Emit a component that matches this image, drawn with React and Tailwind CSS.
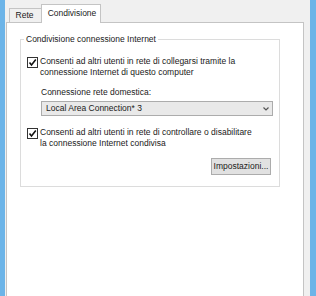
import React from "react";

const CheckBox = () => (
  <div className="mt-[1px] flex h-[11px] w-[11px] shrink-0 items-center justify-center border border-[#333333] bg-white">
    <svg width="9" height="9" viewBox="0 0 9 9">
      <polyline points="1.5,4.5 3.5,7 7.8,1.5" fill="none" stroke="#111111" strokeWidth="1.6" />
    </svg>
  </div>
);

const CheckRow = ({ lines }) => (
  <div className="flex gap-[2px]">
    <CheckBox />
    <div className="leading-[11px]">
      {lines.map((l) => (
        <div key={l}>{l}</div>
      ))}
    </div>
  </div>
);

export default function App() {
  return (
    <div
      className="flex h-[296px] w-[316px] overflow-hidden bg-[#f0f0f0] text-[8.5px] text-[#1a1a1a]"
      style={{ fontFamily: '"Liberation Sans", Arial, sans-serif' }}
    >
      <div className="w-[5px] shrink-0 bg-[#6cb4e8]" />

      <div className="flex flex-1 flex-col pl-[1px] pr-[6px] pt-[4px]">
        {/* tabs */}
        <div className="flex h-[18px] shrink-0 items-end pl-[3px]">
          <div className="-mr-px flex h-[14px] w-[33px] items-center justify-center border border-b-0 border-[#c4c4c4] bg-[#f0f0f0] pr-[2px] leading-[11px]">
            Rete
          </div>
          <div className="relative z-10 -mb-px flex h-[19px] w-[60px] items-center justify-center border border-b-0 border-[#c4c4c4] bg-white pb-[2px] pl-[2px] leading-[11px]">
            Condivisione
          </div>
        </div>

        {/* panel */}
        <div className="flex-1 border border-b-0 border-[#c4c4c4] bg-white pl-[13px] pt-[11px]">
          <fieldset className="w-[260px] border border-[#dcdcdc]">
            <legend className="ml-[3px] px-[2px] leading-[10px]">
              Condivisione connessione Internet
            </legend>
            <div className="flex flex-col pb-[11px] pl-[6px] pr-[6px] pt-[12px]">
              <CheckRow
                lines={[
                  "Consenti ad altri utenti in rete di collegarsi tramite la",
                  "connessione Internet di questo computer",
                ]}
              />
              <div className="ml-[14px] mt-[9px] leading-[11px]">Connessione rete domestica:</div>
              <div className="ml-[14px] mt-[3px] flex h-[15px] items-center justify-between border border-[#acacac] bg-[#e9e9e9] pl-[4px] pr-[3px]">
                <span className="leading-[11px]">Local Area Connection* 3</span>
                <svg width="6" height="4" viewBox="0 0 6 4">
                  <polyline points="0.5,0.5 3,3 5.5,0.5" fill="none" stroke="#555555" strokeWidth="1.2" />
                </svg>
              </div>
              <div className="mt-[11px]">
                <CheckRow
                  lines={[
                    "Consenti ad altri utenti in rete di controllare o disabilitare",
                    "la connessione Internet condivisa",
                  ]}
                />
              </div>
              <div className="mr-[2px] mt-[9px] flex justify-end">
                <div className="flex h-[17px] w-[60px] items-center justify-center border border-[#acacac] bg-[#e1e1e1] leading-[11px]">
                  Impostazioni...
                </div>
              </div>
            </div>
          </fieldset>
        </div>
      </div>

      <div className="w-[6px] shrink-0 bg-[#6cb4e8]" />
    </div>
  );
}
